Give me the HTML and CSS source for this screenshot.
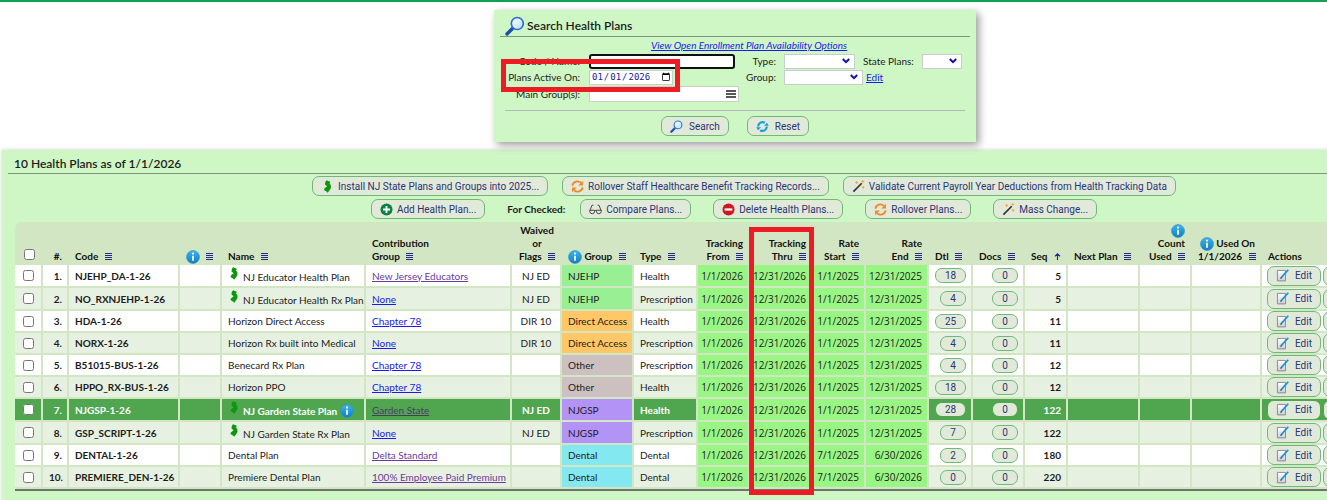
FILE: index.html
```
<!DOCTYPE html>
<html lang="en">
<head>
    <meta charset="UTF-8">
    <meta name="viewport" content="width=device-width, initial-scale=1.0">
    <title>Health Plans</title>
    <link rel="stylesheet" href="styles.css">
</head>
<body>
    <!-- Icons -->
    <svg class="sprite" aria-hidden="true">
        <defs>
            <linearGradient id="blue" x1="0" y1="0" x2="0" y2="1"><stop offset="0" stop-color="#3fb4ea"/><stop offset="1" stop-color="#0f7fc0"/></linearGradient>
            <linearGradient id="lens" x1="0" y1="0" x2="1" y2="1"><stop offset="0" stop-color="#ffffff"/><stop offset="1" stop-color="#b4e0fb"/></linearGradient>
            <linearGradient id="paper" x1="0" y1="0" x2="0" y2="1"><stop offset="0" stop-color="#ffffff"/><stop offset="1" stop-color="#cfcfd6"/></linearGradient>
        </defs>
        <symbol id="search" viewBox="0 0 20 20"><path d="M8.5 11.5 2 18" stroke="#1d4fae" stroke-width="3.4" stroke-linecap="round"/><circle cx="12.3" cy="7.5" r="6" fill="url(#lens)" stroke="#2f6fd2" stroke-width="1.7"/></symbol>
        <symbol id="info" viewBox="0 0 14 14"><circle cx="7" cy="7" r="6.5" fill="url(#blue)" stroke="#2c94cc" stroke-width=".6"/><circle cx="7" cy="3.6" r="1.1" fill="#fff"/><path d="M7 5.8v5" stroke="#fff" stroke-width="1.7"/></symbol>
        <symbol id="bars" viewBox="0 0 7 7"><path d="M0 .5h7M0 2.5h7M0 4.5h7M0 6.5h7" stroke="#26268c" stroke-width="1"/></symbol>
        <symbol id="up" viewBox="0 0 8 8"><path d="M4 8V1M1 3.8 4 .9l3 2.9" fill="none" stroke="#26268c" stroke-width="1.3"/></symbol>
        <symbol id="nj" viewBox="0 0 8 13"><path d="M3 .3 6.8 1.8 6 4l1.3.7.2 3.2-1.6 2.6-1.7 2.2L3 11.4.8 10.2.6 8.8l3-2.5L1.5 4.6 1.8 2z" fill="#0a980c"/></symbol>
        <symbol id="roll" viewBox="0 0 14 14"><path d="M1.5 6A5.4 5.4 0 0 1 10.6 3M12.5 8A5.4 5.4 0 0 1 3.4 11" fill="none" stroke="#f0892c" stroke-width="2"/><path d="M12.9.8v5H7.8zM1.1 13.2v-5h5.1z" fill="#f0892c"/></symbol>
        <symbol id="reset" viewBox="0 0 14 14"><path d="M2.4 7A4.6 4.6 0 0 1 9.5 3M11.6 7A4.6 4.6 0 0 1 4.5 11" fill="none" stroke="#1c9fda" stroke-width="2.4"/><path d="M8.5 6.2h5.3L11.8 3zM.2 7.8h5.3L2.2 11z" fill="#1c9fda"/></symbol>
        <symbol id="wand" viewBox="0 0 14 14"><path d="M1.5 12.5 10.5 3.5" stroke="#33333a" stroke-width="1.8"/><path d="M5 1.2v3M3.5 2.7h3M11.6 0v3M10.1 1.5h3M12 6.4v3M10.5 7.9h3" stroke="#f6a83a" stroke-width="1.1"/></symbol>
        <symbol id="add" viewBox="0 0 14 14"><circle cx="7" cy="7" r="6.5" fill="#088243"/><path d="M7 3.2v7.6M3.2 7h7.6" stroke="#fff" stroke-width="2"/></symbol>
        <symbol id="remove" viewBox="0 0 14 14"><circle cx="7" cy="7" r="6.5" fill="#d01522"/><path d="M2.8 7h8.4" stroke="#fff" stroke-width="2.4"/></symbol>
        <symbol id="glasses" viewBox="0 0 14 12"><path d="M1 7 3.2 1.4h1.6M13 7l-2.2-5.6H9.2M6 7.5q1-.9 2 0M.8 6.8h5.3v1.4q-.4 2.4-2.6 2.4T.8 8.2zM7.9 6.8h5.3v1.4q-.4 2.4-2.6 2.4T7.9 8.2z" fill="none" stroke="#3b3b3b"/></symbol>
        <symbol id="edit" viewBox="0 0 14 14"><path d="M1.5 1.5h8.7v11.3H1.5z" fill="url(#paper)" stroke="#85858c"/><path d="M13.2.8 5.2 9.8" stroke="#1f93d6" stroke-width="1.9"/><path d="m5.6 8.6-1.4 2.4 2.3-1.3z" fill="#444"/></symbol>
    </svg>

    <div class="page">
        <form class="search-panel">
            <h1 class="search-title"><svg class="icon-lg"><use href="#search"/></svg>Search Health Plans</h1>
            <a class="options-link" href="#">View Open Enrollment Plan Availability Options</a>
            <div class="form-row">
                <label class="label-main" for="code">Code / Name:</label>
                <span class="field"><input class="text-input code-input" id="code" type="text"></span>
                <label class="label-side" for="type">Type:</label>
                <select class="select type-select" id="type"><option></option></select>
                <label class="label-state" for="state">State Plans:</label>
                <select class="select state-select" id="state"><option></option></select>
            </div>
            <div class="form-row">
                <label class="label-main" for="active">Plans Active On:</label>
                <span class="field"><input class="text-input date-input" id="active" type="date" value="2026-01-01"></span>
                <label class="label-side" for="group">Group:</label>
                <select class="select group-select" id="group"><option></option></select>
                <a class="edit-link" href="#">Edit</a>
            </div>
            <div class="form-row form-row-last">
                <label class="label-main" for="main">Main Group(s):</label>
                <span class="field"><input class="text-input main-input" id="main" type="text"></span>
            </div>
            <div class="search-actions">
                <button class="btn" type="button"><svg class="icon"><use href="#search"/></svg>Search</button>
                <button class="btn" type="button"><svg class="icon"><use href="#reset"/></svg>Reset</button>
            </div>
            <div class="highlight highlight-date"></div>
        </form>

        <section class="results">
            <h2 class="results-title">10 Health Plans as of 1/1/2026</h2>
            <div class="toolbar toolbar-top">
                <button class="btn"><svg class="icon"><use href="#nj"/></svg>Install NJ State Plans and Groups into 2025...</button>
                <button class="btn"><svg class="icon"><use href="#roll"/></svg>Rollover Staff Healthcare Benefit Tracking Records...</button>
                <button class="btn"><svg class="icon"><use href="#wand"/></svg>Validate Current Payroll Year Deductions from Health Tracking Data</button>
            </div>
            <div class="toolbar">
                <button class="btn"><svg class="icon"><use href="#add"/></svg>Add Health Plan...</button>
                <div class="checked-group">
                    <b>For Checked:</b>
                    <button class="btn"><svg class="icon"><use href="#glasses"/></svg>Compare Plans...</button>
                </div>
                <button class="btn"><svg class="icon"><use href="#remove"/></svg>Delete Health Plans...</button>
                <button class="btn"><svg class="icon"><use href="#roll"/></svg>Rollover Plans...</button>
                <button class="btn"><svg class="icon"><use href="#wand"/></svg>Mass Change...</button>
            </div>

            <div class="table-wrap">
                <table class="plans">
                    <colgroup>
                        <col class="c-check"><col class="c-num"><col class="c-code"><col class="c-info"><col class="c-name"><col class="c-contrib"><col class="c-flags"><col class="c-group"><col class="c-type"><col class="c-from"><col class="c-thru"><col class="c-start"><col class="c-thru"><col class="c-dtl"><col class="c-docs"><col class="c-seq"><col class="c-next"><col class="c-docs"><col class="c-used"><col>
                    </colgroup>
                    <thead>
                        <tr>
                            <th class="mid"><input type="checkbox" aria-label="Select all"></th>
                            <th class="num">#.</th>
                            <th>Code <svg class="bars"><use href="#bars"/></svg></th>
                            <th><svg class="info"><use href="#info"/></svg> <svg class="bars"><use href="#bars"/></svg></th>
                            <th>Name <svg class="bars"><use href="#bars"/></svg></th>
                            <th>Contribution<br>Group <svg class="bars"><use href="#bars"/></svg></th>
                            <th class="mid">Waived<br>or<br>Flags <svg class="bars"><use href="#bars"/></svg></th>
                            <th><svg class="info"><use href="#info"/></svg> Group <svg class="bars"><use href="#bars"/></svg></th>
                            <th>Type <svg class="bars"><use href="#bars"/></svg></th>
                            <th class="num">Tracking<br>From <svg class="bars"><use href="#bars"/></svg></th>
                            <th class="num">Tracking<br>Thru <svg class="bars"><use href="#bars"/></svg></th>
                            <th class="num">Rate<br>Start <svg class="bars"><use href="#bars"/></svg></th>
                            <th class="num">Rate<br>End <svg class="bars"><use href="#bars"/></svg></th>
                            <th>Dtl <svg class="bars"><use href="#bars"/></svg></th>
                            <th>Docs <svg class="bars"><use href="#bars"/></svg></th>
                            <th>Seq <svg class="bars"><use href="#up"/></svg></th>
                            <th>Next Plan <svg class="bars"><use href="#bars"/></svg></th>
                            <th class="num"><svg class="info"><use href="#info"/></svg><br>Count<br>Used <svg class="bars"><use href="#bars"/></svg></th>
                            <th class="num"><svg class="info"><use href="#info"/></svg> Used On<br>1/1/2026 <svg class="bars"><use href="#bars"/></svg></th>
                            <th>Actions</th>
                        </tr>
                    </thead>
                    <tbody>
                        <tr class="tall">
                            <td class="mid"><input type="checkbox" aria-label="Select plan 1"></td><td class="num strong">1.</td><td class="strong">NJEHP_DA-1-26</td><td></td>
                            <td class="low"><svg class="state"><use href="#nj"/></svg>NJ Educator Health Plan</td><td><a class="visited" href="#">New Jersey Educators</a></td><td class="mid">NJ ED</td><td class="njehp">NJEHP</td><td>Health</td>
                            <td class="date">1/1/2026</td><td class="date">12/31/2026</td><td class="date">1/1/2025</td><td class="date">12/31/2025</td>
                            <td class="num"><button class="pill wide">18</button></td><td class="num"><button class="pill">0</button></td><td class="num strong">5</td><td></td><td></td><td></td>
                            <td class="actions"><button class="btn"><svg class="icon"><use href="#edit"/></svg>Edit</button><button class="btn" aria-label="Delete"><svg class="icon"><use href="#remove"/></svg></button></td>
                        </tr>
                        <tr class="tall">
                            <td class="mid"><input type="checkbox" aria-label="Select plan 2"></td><td class="num strong">2.</td><td class="strong">NO_RXNJEHP-1-26</td><td></td>
                            <td class="low"><svg class="state"><use href="#nj"/></svg>NJ Educator Health Rx Plan</td><td><a href="#">None</a></td><td class="mid">NJ ED</td><td class="njehp">NJEHP</td><td>Prescription</td>
                            <td class="date">1/1/2026</td><td class="date">12/31/2026</td><td class="date">1/1/2025</td><td class="date">12/31/2025</td>
                            <td class="num"><button class="pill">4</button></td><td class="num"><button class="pill">0</button></td><td class="num strong">5</td><td></td><td></td><td></td>
                            <td class="actions"><button class="btn"><svg class="icon"><use href="#edit"/></svg>Edit</button><button class="btn" aria-label="Delete"><svg class="icon"><use href="#remove"/></svg></button></td>
                        </tr>
                        <tr>
                            <td class="mid"><input type="checkbox" aria-label="Select plan 3"></td><td class="num strong">3.</td><td class="strong">HDA-1-26</td><td></td>
                            <td>Horizon Direct Access</td><td><a href="#">Chapter 78</a></td><td class="mid">DIR 10</td><td class="direct">Direct Access</td><td>Health</td>
                            <td class="date">1/1/2026</td><td class="date">12/31/2026</td><td class="date">1/1/2025</td><td class="date">12/31/2025</td>
                            <td class="num"><button class="pill wide">25</button></td><td class="num"><button class="pill">0</button></td><td class="num strong">11</td><td></td><td></td><td></td>
                            <td class="actions"><button class="btn"><svg class="icon"><use href="#edit"/></svg>Edit</button><button class="btn" aria-label="Delete"><svg class="icon"><use href="#remove"/></svg></button></td>
                        </tr>
                        <tr>
                            <td class="mid"><input type="checkbox" aria-label="Select plan 4"></td><td class="num strong">4.</td><td class="strong">NORX-1-26</td><td></td>
                            <td>Horizon Rx built into Medical</td><td><a href="#">None</a></td><td class="mid">DIR 10</td><td class="direct">Direct Access</td><td>Prescription</td>
                            <td class="date">1/1/2026</td><td class="date">12/31/2026</td><td class="date">1/1/2025</td><td class="date">12/31/2025</td>
                            <td class="num"><button class="pill">4</button></td><td class="num"><button class="pill">0</button></td><td class="num strong">11</td><td></td><td></td><td></td>
                            <td class="actions"><button class="btn"><svg class="icon"><use href="#edit"/></svg>Edit</button><button class="btn" aria-label="Delete"><svg class="icon"><use href="#remove"/></svg></button></td>
                        </tr>
                        <tr>
                            <td class="mid"><input type="checkbox" aria-label="Select plan 5"></td><td class="num strong">5.</td><td class="strong">B51015-BUS-1-26</td><td></td>
                            <td>Benecard Rx Plan</td><td><a href="#">Chapter 78</a></td><td></td><td class="other">Other</td><td>Prescription</td>
                            <td class="date">1/1/2026</td><td class="date">12/31/2026</td><td class="date">1/1/2025</td><td class="date">12/31/2025</td>
                            <td class="num"><button class="pill">4</button></td><td class="num"><button class="pill">0</button></td><td class="num strong">12</td><td></td><td></td><td></td>
                            <td class="actions"><button class="btn"><svg class="icon"><use href="#edit"/></svg>Edit</button><button class="btn" aria-label="Delete"><svg class="icon"><use href="#remove"/></svg></button></td>
                        </tr>
                        <tr>
                            <td class="mid"><input type="checkbox" aria-label="Select plan 6"></td><td class="num strong">6.</td><td class="strong">HPPO_RX-BUS-1-26</td><td></td>
                            <td>Horizon PPO</td><td><a href="#">Chapter 78</a></td><td></td><td class="other">Other</td><td>Health</td>
                            <td class="date">1/1/2026</td><td class="date">12/31/2026</td><td class="date">1/1/2025</td><td class="date">12/31/2025</td>
                            <td class="num"><button class="pill wide">18</button></td><td class="num"><button class="pill">0</button></td><td class="num strong">12</td><td></td><td></td><td></td>
                            <td class="actions"><button class="btn"><svg class="icon"><use href="#edit"/></svg>Edit</button><button class="btn" aria-label="Delete"><svg class="icon"><use href="#remove"/></svg></button></td>
                        </tr>
                        <tr class="tall selected">
                            <td class="mid"><input type="checkbox" aria-label="Select plan 7"></td><td class="num strong">7.</td><td class="strong">NJGSP-1-26</td><td></td>
                            <td class="low"><svg class="state"><use href="#nj"/></svg>NJ Garden State Plan <svg class="info"><use href="#info"/></svg></td><td><a class="visited" href="#">Garden State</a></td><td class="mid">NJ ED</td><td class="njgsp">NJGSP</td><td>Health</td>
                            <td class="date">1/1/2026</td><td class="date">12/31/2026</td><td class="date">1/1/2025</td><td class="date">12/31/2025</td>
                            <td class="num"><button class="pill wide">28</button></td><td class="num"><button class="pill">0</button></td><td class="num strong">122</td><td></td><td></td><td></td>
                            <td class="actions"><button class="btn"><svg class="icon"><use href="#edit"/></svg>Edit</button><button class="btn" aria-label="Delete"><svg class="icon"><use href="#remove"/></svg></button></td>
                        </tr>
                        <tr class="tall">
                            <td class="mid"><input type="checkbox" aria-label="Select plan 8"></td><td class="num strong">8.</td><td class="strong">GSP_SCRIPT-1-26</td><td></td>
                            <td class="low"><svg class="state"><use href="#nj"/></svg>NJ Garden State Rx Plan</td><td><a href="#">None</a></td><td class="mid">NJ ED</td><td class="njgsp">NJGSP</td><td>Prescription</td>
                            <td class="date">1/1/2026</td><td class="date">12/31/2026</td><td class="date">1/1/2025</td><td class="date">12/31/2025</td>
                            <td class="num"><button class="pill">7</button></td><td class="num"><button class="pill">0</button></td><td class="num strong">122</td><td></td><td></td><td></td>
                            <td class="actions"><button class="btn"><svg class="icon"><use href="#edit"/></svg>Edit</button><button class="btn" aria-label="Delete"><svg class="icon"><use href="#remove"/></svg></button></td>
                        </tr>
                        <tr>
                            <td class="mid"><input type="checkbox" aria-label="Select plan 9"></td><td class="num strong">9.</td><td class="strong">DENTAL-1-26</td><td></td>
                            <td>Dental Plan</td><td><a class="visited" href="#">Delta Standard</a></td><td></td><td class="dental">Dental</td><td>Dental</td>
                            <td class="date">1/1/2026</td><td class="date">12/31/2026</td><td class="date">7/1/2025</td><td class="date">6/30/2026</td>
                            <td class="num"><button class="pill">2</button></td><td class="num"><button class="pill">0</button></td><td class="num strong">180</td><td></td><td></td><td></td>
                            <td class="actions"><button class="btn"><svg class="icon"><use href="#edit"/></svg>Edit</button><button class="btn" aria-label="Delete"><svg class="icon"><use href="#remove"/></svg></button></td>
                        </tr>
                        <tr>
                            <td class="mid"><input type="checkbox" aria-label="Select plan 10"></td><td class="num strong">10.</td><td class="strong">PREMIERE_DEN-1-26</td><td></td>
                            <td>Premiere Dental Plan</td><td><a class="visited" href="#">100% Employee Paid Premium</a></td><td></td><td class="dental">Dental</td><td>Dental</td>
                            <td class="date">1/1/2026</td><td class="date">12/31/2026</td><td class="date">7/1/2025</td><td class="date">6/30/2026</td>
                            <td class="num"><button class="pill">0</button></td><td class="num"><button class="pill">0</button></td><td class="num strong">220</td><td></td><td></td><td></td>
                            <td class="actions"><button class="btn"><svg class="icon"><use href="#edit"/></svg>Edit</button><button class="btn" aria-label="Delete"><svg class="icon"><use href="#remove"/></svg></button></td>
                        </tr>
                    </tbody>
                </table>
                <div class="highlight highlight-thru"></div>
            </div>
        </section>
    </div>
</body>
</html>
```
FILE: styles.css
```
* {
    box-sizing: border-box;
}

html {
    overflow: hidden;
}

body {
    margin: 0;
    overflow: hidden;
    font-family: Lato, "Open Sans", sans-serif;
    font-size: 10px;
    color: #1c1c1c;
    background-color: #fff;
}

.sprite {
    position: absolute;
    width: 0;
    height: 0;
}

/* The table is wider than most windows */
.page {
    min-width: 1470px;
    border-top: 2px solid #12a150;
    padding: 8px 2px 0 2px;
}

a {
    color: #1a1aee;
}

a.visited {
    color: #6a3a9c;
}

h1, h2 {
    margin: 0;
    font-weight: 600;
}

/* Search */
.search-panel {
    position: relative;
    width: 482px;
    margin: 0 auto;
    padding: 5px 6px 6px;
    background-color: #cff6c5;
    box-shadow: 3px 3px 8px rgba(0, 0, 0, 0.4);
}

.search-title {
    display: flex;
    align-items: center;
    gap: 2px;
    height: 22px;
    padding-left: 5px;
    border-bottom: 1px solid #7f9480;
    font-size: 12px;
}

.icon-lg {
    width: 20px;
    height: 20px;
}

.options-link {
    display: block;
    padding-left: 28px;
    line-height: 16px;
    text-align: center;
    font-style: italic;
}

.form-row {
    display: flex;
    align-items: center;
    height: 16px;
}

.form-row-last {
    margin-top: 1px;
}

.label-main {
    width: 80px;
    margin-right: 9px;
    text-align: right;
}

.field {
    display: flex;
    width: 150px;
}

.label-side {
    width: 37px;
    margin-right: 8px;
    text-align: right;
}

.label-state {
    margin: 0 8px;
}

.text-input, .select {
    height: 15px;
    margin: 0;
    padding: 0 2px;
    border: 1px solid #c8cfc8;
    border-radius: 0;
    background-color: #fff;
    font-size: 10px;
    color: #1a1aa0;
}

.code-input {
    width: 146px;
    border: 2px solid #101010;
    border-radius: 3px;
}

.date-input {
    width: 84px;
    padding: 0 1px;
    font-family: "DejaVu Sans Mono", monospace;
    font-size: 9px;
}

.date-input::-webkit-calendar-picker-indicator {
    width: 10px;
    height: 10px;
    margin: 0;
    padding: 0;
}

.main-input {
    width: 150px;
    height: 16px;
    background: #fff url("data:image/svg+xml,%3Csvg xmlns='http://www.w3.org/2000/svg' width='10' height='8'%3E%3Cpath d='M0 1h10M0 4h10M0 7h10' stroke='%23222' stroke-width='1.6'/%3E%3C/svg%3E") no-repeat right 2px center;
}

.select {
    appearance: none;
    background: #fff url("data:image/svg+xml,%3Csvg xmlns='http://www.w3.org/2000/svg' width='8' height='6'%3E%3Cpath d='M.8 1 4 4.2 7.2 1' fill='none' stroke='%231010a8' stroke-width='2'/%3E%3C/svg%3E") no-repeat right 4px center;
}

.type-select {
    width: 71px;
}

.group-select {
    width: 79px;
}

.state-select {
    width: 40px;
}

.edit-link {
    margin-left: 3px;
}

.search-actions {
    display: flex;
    justify-content: center;
    gap: 18px;
    margin: 8px 5px 0;
    padding-top: 5px;
    border-top: 1px solid #b2b9bd;
}

/* Buttons */
.btn {
    display: inline-flex;
    align-items: center;
    gap: 4px;
    height: 20px;
    margin: 0;
    padding: 0 8px;
    border: 1px solid #70b878;
    border-radius: 7px;
    background-color: #e1ead9;
    font-family: Roboto, Arial, sans-serif;
    font-size: 10px;
    color: #2b3474;
    white-space: nowrap;
}

.icon {
    width: 13px;
    height: 13px;
}

.pill {
    min-width: 26px;
    height: 15px;
    padding: 0 8px;
    border: 1px solid #70b878;
    border-radius: 7px;
    background-color: #e1ead9;
    font-family: Roboto, Arial, sans-serif;
    font-size: 10px;
    line-height: 13px;
    color: #2b3474;
    vertical-align: middle;
}

.pill.wide {
    min-width: 31px;
}

/* Results */
.results {
    margin-top: 8px;
    padding: 5px 0 20px 6px;
    background-color: #cff6c5;
    box-shadow: 0 0 4px rgba(0, 0, 0, 0.2);
}

.results-title {
    padding-left: 6px;
    border-bottom: 1px solid #7f9480;
    font-size: 12px;
    line-height: 18px;
}

.toolbar {
    display: flex;
    justify-content: center;
    align-items: center;
    gap: 22px;
    margin-top: 3px;
    padding-right: 8px;
}

.toolbar-top {
    gap: 14px;
    margin-top: 2px;
    padding: 0 0 0 12px;
}

.search-actions .btn, .actions .btn {
    gap: 6px;
}

.checked-group {
    display: flex;
    align-items: center;
    gap: 15px;
}

.table-wrap {
    position: relative;
    margin: 3px 6px 0 7px;
}

.plans {
    width: 100%;
    table-layout: fixed;
    border-collapse: separate;
    border-spacing: 0;
    border-bottom: 2px solid #6b776c;
    border-radius: 6px 6px 0 0;
    background-color: #d3e6c4;
}

.c-check { width: 28px; }
.c-num { width: 26px; }
.c-code { width: 111px; }
.c-info { width: 42px; }
.c-name { width: 144px; }
.c-contrib { width: 146px; }
.c-flags { width: 50px; }
.c-group { width: 72px; }
.c-type { width: 64px; }
.c-from { width: 52px; }
.c-thru { width: 63px; }
.c-start { width: 53px; }
.c-dtl { width: 44px; }
.c-docs { width: 52px; }
.c-seq { width: 43px; }
.c-next { width: 72px; }
.c-used { width: 70px; }

th, td {
    padding: 0 5px 0 6px;
    text-align: left;
    white-space: nowrap;
}

th {
    height: 43px;
    padding-bottom: 2px;
    padding-right: 7px;
    vertical-align: bottom;
    font-weight: 700;
    line-height: 13px;
    color: #111;
}

td {
    height: 22px;
    border-right: 2px solid #d3e6c4;
    border-bottom: 2px solid #d3e6c4;
    background-color: #fff;
    line-height: 14px;
}

.tall td {
    height: 23px;
}

tbody tr:nth-child(even) td {
    background-color: #e6f1e1;
}

.plans .mid {
    padding: 0;
    text-align: center;
}

.plans th.mid {
    padding-bottom: 2px;
}

.plans .num, .plans .date {
    text-align: right;
}

.plans .low {
    padding-top: 3px;
}

.strong {
    font-weight: 700;
}

.plans .date {
    padding: 0 5px 0 0;
    background-color: #99f685;
    font-family: "Open Sans", sans-serif;
}

.plans .njehp { background-color: #99f094; }
.plans .direct { background-color: #ffc766; }
.plans .other { background-color: #ccc0c0; }
.plans .njgsp { background-color: #b493f7; }
.plans .dental { background-color: #84e8f0; }

.plans tr:nth-child(even) .date { background-color: #99f685; }
.plans tr:nth-child(even) .njehp { background-color: #99f094; }
.plans tr:nth-child(even) .direct { background-color: #ffc766; }
.plans tr:nth-child(even) .other { background-color: #ccc0c0; }
.plans tr:nth-child(even) .njgsp { background-color: #b493f7; }
.plans tr:nth-child(even) .dental { background-color: #84e8f0; }

.selected td {
    background-color: #4fa64f;
    color: #fff;
    font-weight: 700;
}

.selected .date, .selected .njgsp {
    color: #1c1c1c;
    font-weight: 400;
}

.selected a.visited {
    color: #4b3a66;
    font-weight: 400;
}

.selected .btn, .selected .pill {
    border-color: #4fa64f;
}

input[type="checkbox"] {
    display: block;
    width: 11px;
    height: 11px;
    margin: 0 auto;
}

th input[type="checkbox"] {
    margin-bottom: 3px;
}

.info {
    width: 14px;
    height: 14px;
    margin: -2px 0;
    vertical-align: middle;
}

.low .info {
    vertical-align: -1px;
}

.bars {
    width: 7px;
    height: 7px;
    margin-left: 4px;
}

.state {
    width: 8px;
    height: 13px;
    margin: -4px 5px 0 2px;
    vertical-align: 1px;
}

.plans .actions {
    padding: 0 0 0 5px;
    border-right: 0;
    line-height: 0;
}

.actions .btn {
    margin-right: 2px;
    vertical-align: middle;
}

/* Red frames */
.highlight {
    position: absolute;
    border: 5px solid #ed1c24;
    pointer-events: none;
}

.highlight-date {
    top: 49px;
    left: 7px;
    width: 179px;
    height: 33px;
}

.highlight-thru {
    top: 5px;
    bottom: -4px;
    left: 734px;
    width: 65px;
}
```
